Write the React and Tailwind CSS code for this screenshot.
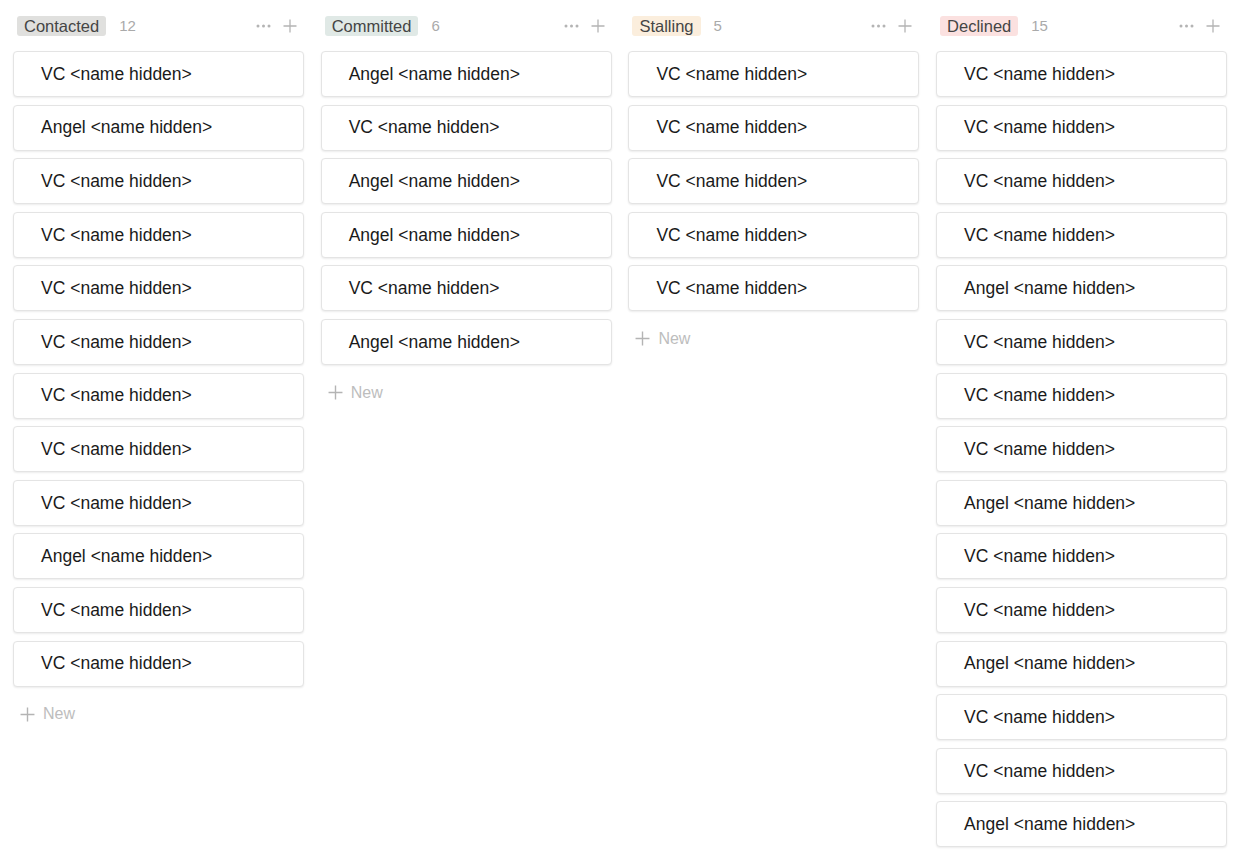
import React from 'react'

// board columns
const columns = [
  {
    title: 'Contacted',
    count: 12,
    tag: 'bg-[#e0e0de]',
    items: ['VC', 'Angel', 'VC', 'VC', 'VC', 'VC', 'VC', 'VC', 'VC', 'Angel', 'VC', 'VC'],
  },
  {
    title: 'Committed',
    count: 6,
    tag: 'bg-[#e0e9e6]',
    items: ['Angel', 'VC', 'Angel', 'Angel', 'VC', 'Angel'],
  },
  {
    title: 'Stalling',
    count: 5,
    tag: 'bg-[#fbeedd]',
    items: ['VC', 'VC', 'VC', 'VC', 'VC'],
  },
  {
    title: 'Declined',
    count: 15,
    tag: 'bg-[#fbe1e0]',
    items: [
      'VC', 'VC', 'VC', 'VC', 'Angel', 'VC', 'VC', 'VC',
      'Angel', 'VC', 'VC', 'Angel', 'VC', 'VC', 'Angel',
    ],
  },
]

function Dots() {
  return (
    <svg width="15" height="4" viewBox="0 0 15 4" fill="#b4b4b4">
      <circle cx="2" cy="2" r="1.5" />
      <circle cx="7.5" cy="2" r="1.5" />
      <circle cx="13" cy="2" r="1.5" />
    </svg>
  )
}

function Plus({ size = 14 }) {
  return (
    <svg width={size} height={size} viewBox="0 0 14 14" stroke="#b4b4b4" strokeWidth="1.3" fill="none">
      <path d="M7 0.5v13M0.5 7h13" />
    </svg>
  )
}

function Column({ col }) {
  return (
    <div className="w-[291px] shrink-0">
      {/* header */}
      <div className="flex items-center h-[20px] pl-[4px] pr-[7px]">
        <span className={`${col.tag} text-[#454545] text-[16.5px] leading-[20px] px-[7px] rounded-[3px]`}>
          {col.title}
        </span>
        <span className="ml-[13px] text-[15px] text-[#aaaaaa]">{col.count}</span>
        <div className="ml-auto flex items-center gap-[12px]">
          <Dots />
          <Plus />
        </div>
      </div>
      {/* cards */}
      <div className="mt-[15px] flex flex-col gap-[7.6px]">
        {col.items.map((kind, i) => (
          <div
            key={i}
            className="h-[46px] flex items-center pl-[27px] bg-white border border-[#e4e4e4] rounded-[4px] shadow-[0_1px_2px_rgba(0,0,0,0.08)] text-[17.5px] text-[#1a1a1a]"
          >
            {kind} &lt;name hidden&gt;
          </div>
        ))}
        <div className="h-[40px] flex items-center pl-[7px] gap-[8px] text-[16px] text-[#bdbdbd]">
          <Plus size={15} />
          <span>New</span>
        </div>
      </div>
    </div>
  )
}

export default function App() {
  return (
    <div className="min-h-[864px] bg-white pt-[16px] pl-[13px] font-['Liberation_Sans','Arial',sans-serif]">
      <div className="flex gap-[16.7px]">
        {columns.map((col) => (
          <Column key={col.title} col={col} />
        ))}
      </div>
    </div>
  )
}
